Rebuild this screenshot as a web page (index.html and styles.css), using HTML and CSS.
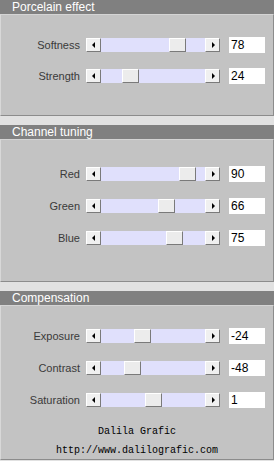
FILE: index.html
```html
<!DOCTYPE html>
<html lang="en">
<head>
    <meta charset="UTF-8">
    <title>Porcelain</title>
    <link rel="stylesheet" href="styles.css">
</head>
<body>
    <div class="panel panel-porcelain">
        <div class="panel-title">Porcelain effect</div>
        <div class="panel-body">
            <div class="row">
                <label class="row-label">Softness</label>
                <div class="slider">
                    <span class="arrow arrow-left"></span>
                    <span class="track"><span class="thumb" style="left:68px"></span></span>
                    <span class="arrow arrow-right"></span>
                </div>
                <input class="value" type="text" value="78">
            </div>
            <div class="row">
                <label class="row-label">Strength</label>
                <div class="slider">
                    <span class="arrow arrow-left"></span>
                    <span class="track"><span class="thumb" style="left:21px"></span></span>
                    <span class="arrow arrow-right"></span>
                </div>
                <input class="value" type="text" value="24">
            </div>
        </div>
    </div>

    <div class="panel panel-channel">
        <div class="panel-title">Channel tuning</div>
        <div class="panel-body">
            <div class="row">
                <label class="row-label">Red</label>
                <div class="slider">
                    <span class="arrow arrow-left"></span>
                    <span class="track"><span class="thumb" style="left:78px"></span></span>
                    <span class="arrow arrow-right"></span>
                </div>
                <input class="value" type="text" value="90">
            </div>
            <div class="row">
                <label class="row-label">Green</label>
                <div class="slider">
                    <span class="arrow arrow-left"></span>
                    <span class="track"><span class="thumb" style="left:57px"></span></span>
                    <span class="arrow arrow-right"></span>
                </div>
                <input class="value" type="text" value="66">
            </div>
            <div class="row">
                <label class="row-label">Blue</label>
                <div class="slider">
                    <span class="arrow arrow-left"></span>
                    <span class="track"><span class="thumb" style="left:65px"></span></span>
                    <span class="arrow arrow-right"></span>
                </div>
                <input class="value" type="text" value="75">
            </div>
        </div>
    </div>

    <div class="panel panel-comp">
        <div class="panel-title">Compensation</div>
        <div class="panel-body">
            <div class="row">
                <label class="row-label">Exposure</label>
                <div class="slider">
                    <span class="arrow arrow-left"></span>
                    <span class="track"><span class="thumb" style="left:33px"></span></span>
                    <span class="arrow arrow-right"></span>
                </div>
                <input class="value" type="text" value="-24">
            </div>
            <div class="row">
                <label class="row-label">Contrast</label>
                <div class="slider">
                    <span class="arrow arrow-left"></span>
                    <span class="track"><span class="thumb" style="left:23px"></span></span>
                    <span class="arrow arrow-right"></span>
                </div>
                <input class="value" type="text" value="-48">
            </div>
            <div class="row">
                <label class="row-label">Saturation</label>
                <div class="slider">
                    <span class="arrow arrow-left"></span>
                    <span class="track"><span class="thumb" style="left:44px"></span></span>
                    <span class="arrow arrow-right"></span>
                </div>
                <input class="value" type="text" value="1">
            </div>
            <div class="credits">
                <p>Dalila Grafic</p>
                <p>http://www.dalilografic.com</p>
            </div>
        </div>
    </div>
</body>
</html>
```

FILE: styles.css
```css
* {
    box-sizing: border-box;
    margin: 0;
    padding: 0;
}

body {
    width: 274px;
    height: 461px;
    background: #e1e1e1;
    font-family: 'Liberation Sans', Arial, sans-serif;
    font-size: 11px;
    overflow: hidden;
}

.panel {
    margin-bottom: 9px;
}

.panel-title {
    height: 14px;
    line-height: 14px;
    padding-left: 12px;
    background: #808080;
    color: #fff;
    font-size: 12px;
}

.panel-body {
    display: flex;
    flex-direction: column;
    gap: 16px;
    background: #c3c3c3;
    border-top: 1px solid #d4d4d4;
    border-left: 1px solid #d8d8d8;
    border-right: 1px solid #8c8c8c;
    border-bottom: 1px solid #8c8c8c;
}

.panel-porcelain .panel-body {
    gap: 15px;
    padding: 22px 0 31px;
}

.panel-channel .panel-body {
    padding: 26px 0 35px;
}

.panel-comp .panel-body {
    padding: 22px 0 0;
    height: 155px;
}

.row {
    display: flex;
    align-items: center;
    height: 16px;
}

.row-label {
    width: 79px;
    text-align: right;
    color: #3a3a3a;
    margin-right: 6px;
}

.slider {
    display: flex;
    width: 134px;
    height: 14px;
    margin-right: 9px;
}

.arrow {
    position: relative;
    width: 15px;
    height: 14px;
    background: #f0f0f0;
    border-top: 1px solid #fff;
    border-left: 1px solid #fff;
    border-right: 1px solid #7a7a7a;
    border-bottom: 1px solid #7a7a7a;
}

.arrow::after {
    content: "";
    position: absolute;
    top: 3px;
    border-top: 3px solid transparent;
    border-bottom: 3px solid transparent;
}

.arrow-left::after {
    left: 5px;
    border-right: 3px solid #000;
}

.arrow-right::after {
    left: 6px;
    border-left: 3px solid #000;
}

.track {
    position: relative;
    flex: 1;
    background: #e0e0fc;
}

.thumb {
    position: absolute;
    top: 0;
    width: 17px;
    height: 14px;
    background: #ececec;
    border-top: 1px solid #fff;
    border-left: 1px solid #fff;
    border-right: 1px solid #7a7a7a;
    border-bottom: 1px solid #7a7a7a;
}

.value {
    width: 36px;
    height: 16px;
    border: none;
    outline: none;
    background: #fff;
    padding: 0 2px;
    font-family: 'Liberation Sans', Arial, sans-serif;
    font-size: 12px;
    color: #000;
}

.credits {
    margin-top: -2px;
    text-align: center;
    font-family: 'Liberation Mono', monospace;
    font-size: 10px;
    line-height: 19px;
    color: #000;
}
```
